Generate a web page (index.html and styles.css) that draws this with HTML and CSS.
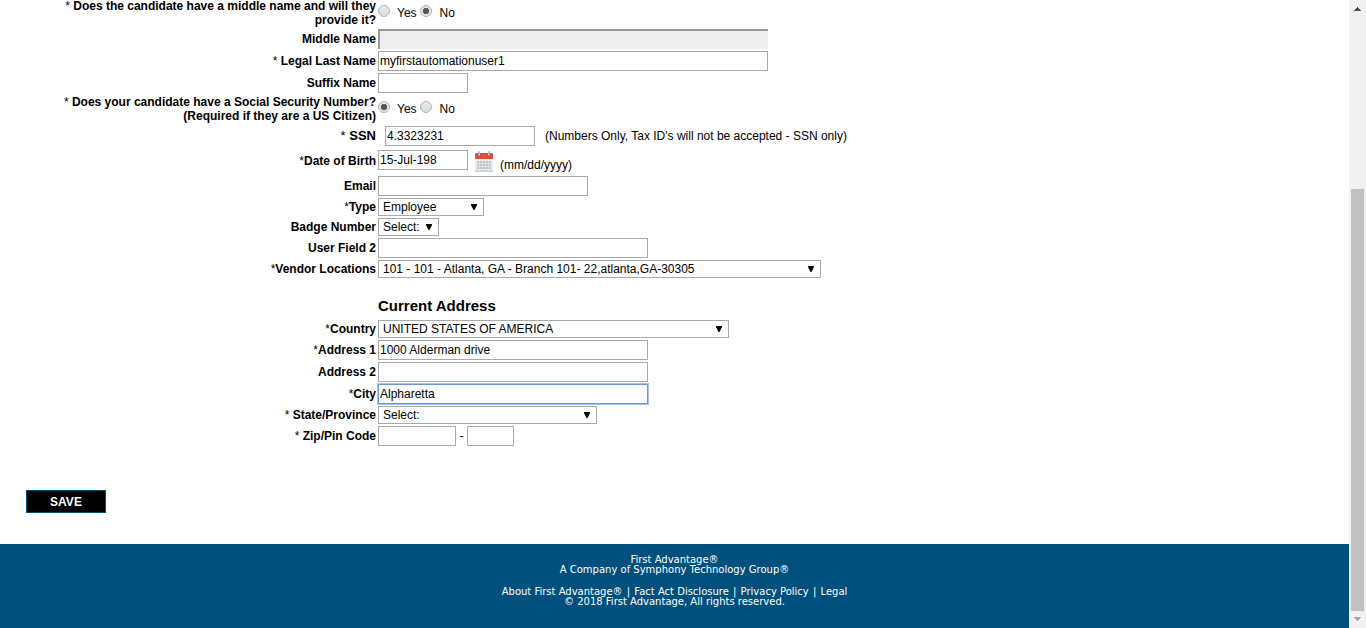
FILE: index.html
```html
<!DOCTYPE html>
<html lang="en">
<head>
<meta charset="utf-8">
<title>Candidate Information</title>
<link rel="stylesheet" href="styles.css">
</head>
<body>
<div class="page">
  <main>
    <form class="form">
      <fieldset class="row row-first">
        <legend class="label-box"><span class="label"><span class="star">*</span> Does the candidate have a middle name and will they<br>provide it?</span></legend>
        <div class="radios">
          <input class="radio" type="radio" name="middle" id="middle-yes"><label for="middle-yes">Yes</label>
          <input class="radio" type="radio" name="middle" id="middle-no" checked><label for="middle-no">No</label>
        </div>
      </fieldset>
      <div class="row">
        <label class="label" for="middle-name">Middle Name</label>
        <input class="text w-name disabled" id="middle-name" type="text" disabled>
      </div>
      <div class="row">
        <label class="label" for="last-name"><span class="star">*</span> Legal Last Name</label>
        <input class="text w-name" id="last-name" type="text" value="myfirstautomationuser1">
      </div>
      <div class="row">
        <label class="label" for="suffix">Suffix Name</label>
        <input class="text w-small" id="suffix" type="text">
      </div>
      <fieldset class="row row-question">
        <legend class="label-box"><span class="label"><span class="star">*</span> Does your candidate have a Social Security Number?<br>(Required if they are a US Citizen)</span></legend>
        <div class="radios">
          <input class="radio" type="radio" name="hasssn" id="ssn-yes" checked><label for="ssn-yes">Yes</label>
          <input class="radio" type="radio" name="hasssn" id="ssn-no"><label for="ssn-no">No</label>
        </div>
      </fieldset>
      <div class="row">
        <label class="label label-ssn" for="ssn"><span class="star">*</span> SSN</label>
        <input class="text w-ssn" id="ssn" type="text" value="4.3323231">
        <span class="hint">(Numbers Only, Tax ID's will not be accepted - SSN only)</span>
      </div>
      <div class="row row-date">
        <label class="label" for="dob"><span class="star">*</span>Date of Birth</label>
        <input class="text w-small" id="dob" type="text" value="15-Jul-198">
        <button class="calendar" type="button" aria-label="Choose date">
          <svg width="19" height="22" viewBox="0 0 19 22">
            <rect x="0" y="8" width="18" height="13" rx="1" fill="#e9eced"/>
            <path d="M0 19h18v1q0 1-1 1H1q-1 0-1-1z" fill="#cfd3d5"/>
            <path d="M0 3q0-1 1-1h16q1 0 1 1v5H0z" fill="#e64c3c"/>
            <path d="M2 10h14v8H2z" fill="#bcc3c9"/>
            <path d="M4.500 10v8M7.500 10v8M10.500 10v8M13.500 10v8M2 12.500h14M2 15.500h14" stroke="#e6e9ea" stroke-width=".8"/>
            <circle cx="4" cy="4" r="1.600" fill="#b23a30"/><circle cx="14" cy="4" r="1.600" fill="#b23a30"/>
            <path d="M4 1v3M14 1v3" stroke="#b4bbbf" stroke-width="2" stroke-linecap="round"/>
          </svg>
        </button>
        <span class="hint-date">(mm/dd/yyyy)</span>
      </div>
      <div class="row">
        <label class="label" for="email">Email</label>
        <input class="text w-email" id="email" type="text">
      </div>
      <div class="row">
        <label class="label" for="type"><span class="star">*</span>Type</label>
        <select class="select w-type" id="type"><option>Employee</option></select>
      </div>
      <div class="row">
        <label class="label" for="badge">Badge Number</label>
        <select class="select w-badge" id="badge"><option>Select:</option></select>
      </div>
      <div class="row">
        <label class="label" for="field2">User Field 2</label>
        <input class="text w-wide" id="field2" type="text">
      </div>
      <div class="row">
        <label class="label" for="vendor"><span class="star">*</span>Vendor Locations</label>
        <select class="select w-vendor" id="vendor"><option>101 - 101 - Atlanta, GA - Branch 101- 22,atlanta,GA-30305</option></select>
      </div>
      <h2 class="heading">Current Address</h2>
      <div class="row">
        <label class="label" for="country"><span class="star">*</span>Country</label>
        <select class="select w-country" id="country"><option>UNITED STATES OF AMERICA</option></select>
      </div>
      <div class="row">
        <label class="label" for="address1"><span class="star">*</span>Address 1</label>
        <input class="text w-wide" id="address1" type="text" value="1000 Alderman drive">
      </div>
      <div class="row">
        <label class="label" for="address2">Address 2</label>
        <input class="text w-wide" id="address2" type="text">
      </div>
      <div class="row">
        <label class="label" for="city"><span class="star">*</span>City</label>
        <input class="text w-wide active" id="city" type="text" value="Alpharetta">
      </div>
      <div class="row">
        <label class="label" for="state"><span class="star">*</span> State/Province</label>
        <select class="select w-state" id="state"><option>Select:</option></select>
      </div>
      <div class="row">
        <label class="label" for="zip"><span class="star">*</span> Zip/Pin Code</label>
        <input class="text w-zip" id="zip" type="text">
        <span class="dash">-</span>
        <input class="text w-zip4" id="zip4" type="text" aria-label="Zip code extension">
      </div>
      <button class="save" type="submit">SAVE</button>
    </form>
  </main>
  <footer class="footer">
    <p>First Advantage®<br>A Company of Symphony Technology Group®</p>
    <p><a href="#">About First Advantage®</a> | <a href="#">Fact Act Disclosure</a> | <a href="#">Privacy Policy</a> | <a href="#">Legal</a><br>© 2018 First Advantage, All rights reserved.</p>
  </footer>
</div>
<div class="scrollbar" aria-hidden="true">
  <svg class="arrow" width="17" height="17" viewBox="0 0 17 17" shape-rendering="crispEdges"><path d="M5 11h7v-1h-1V9h-1V8H9V7H8v1H7v1H6v1H5z" fill="#505050"/></svg>
  <div class="track"><div class="thumb"></div></div>
  <svg class="arrow" width="17" height="17" viewBox="0 0 17 17" shape-rendering="crispEdges"><path d="M5 6h7v1h-1v1h-1v1H9v1H8V9H7V8H6V7H5z" fill="#a3a3a3"/></svg>
</div>
</body>
</html>
```
FILE: styles.css
```css
* { box-sizing: border-box; }

body {
  margin: 0;
  display: flex;
  min-height: 100vh;
  background: #fff;
  color: #000;
  font: 12px/14px "Liberation Sans", Arial, sans-serif;
}

.page {
  flex: 1;
  display: flex;
  flex-direction: column;
}

.form {
  display: flex;
  flex-direction: column;
  gap: 2px;
}

.row {
  display: flex;
  align-items: center;
  margin: 0;
  padding: 0;
  border: 0;
  min-width: 0;
}

.row-first { height: 27px; align-items: flex-end; }
.row-question { height: 29px; }
.row-date { height: 26px; }

.label,
.label-box {
  width: 376px;
  flex: none;
  margin-right: 2px;
  padding: 0;
  text-align: right;
  font-weight: bold;
}

.label-box { float: left; }
.label-box .label { display: block; margin: 0; }
.row-first .label { margin-top: -1px; }
.label-ssn { font-size: 13px; margin-right: 9px; }
.star { font-weight: normal; }

.radios {
  display: flex;
  align-items: center;
  padding-bottom: 4px;
}

.row-first .radios { padding-bottom: 7px; }

.radios label { margin: 4px 3px 0 7px; }
.radios label:last-child { margin-left: 8px; }

.radio {
  appearance: none;
  width: 12px;
  height: 12px;
  margin: 0;
  border: 1px solid #b4b4b4;
  border-radius: 50%;
  background: linear-gradient(#e9e9e9, #dcdcdc);
}

.radio:checked {
  background: radial-gradient(circle, #555 0 2px, #666 3px, #e4e4e4 3px);
}

.text,
.select {
  margin: 0;
  border: 1px solid #a9a9a9;
  border-radius: 0;
  background: #fff;
  color: #000;
  font: inherit;
  outline: 0;
}

.text {
  height: 20px;
  padding: 0 1px;
}

.disabled {
  border: solid #999;
  border-width: 2px 0 0 2px;
  background: #eee;
}

.active {
  border-color: #6c94d6;
  box-shadow: 0 0 0 1px #a3c3f7;
}

.select {
  appearance: none;
  height: 18px;
  padding: 0 18px 0 4px;
  background: #fff url("data:image/svg+xml,%3Csvg xmlns='http://www.w3.org/2000/svg' width='6' height='6'%3E%3Cpath d='M0 0h6v1L3.500 6h-1L0 1z'/%3E%3C/svg%3E") no-repeat right 6px center;
}

.w-name { width: 390px; }
.w-small { width: 90px; }
.w-ssn { width: 150px; }
.w-email { width: 210px; }
.w-type { width: 106px; }
.w-badge { width: 61px; }
.w-wide { width: 270px; }
.w-vendor { width: 443px; }
.w-country { width: 351px; }
.w-state { width: 219px; }
.w-zip { width: 78px; }
.w-zip4 { width: 47px; }

.hint { margin-left: 10px; }

.row-date .text { align-self: flex-start; margin-top: 2px; }

.calendar {
  display: flex;
  margin: 2px 6px 0 7px;
  padding: 0;
  border: 0;
  background: none;
}

.hint-date { margin-top: 8px; }

.heading {
  height: 38px;
  margin: 0 0 0 378px;
  padding-top: 17px;
  font-size: 15px;
  line-height: 18px;
}

.dash { width: 11px; text-align: center; }

.save {
  align-self: flex-start;
  width: 80px;
  height: 23px;
  margin: 42px 0 31px 26px;
  padding: 0;
  border: 1px solid #00507d;
  background: #000;
  color: #fff;
  font: bold 12px/14px "Liberation Sans", Arial, sans-serif;
}

.footer {
  flex: 1;
  padding-top: 11px;
  background: #00507d;
  color: #fff;
  text-align: center;
  font: 10px/10px "DejaVu Sans", Verdana, sans-serif;
}

.footer p { margin: 0 0 12px; }
.footer a { margin: 0 1px; color: inherit; text-decoration: none; }

.scrollbar {
  display: flex;
  flex-direction: column;
  flex: none;
  width: 17px;
  background: #f1f1f1;
}

.arrow { flex: none; }

.track {
  flex: 1;
  display: flex;
  flex-direction: column;
  justify-content: flex-end;
  padding: 0 2px;
}

.thumb {
  height: 71%;
  background: #c1c1c1;
}
```
